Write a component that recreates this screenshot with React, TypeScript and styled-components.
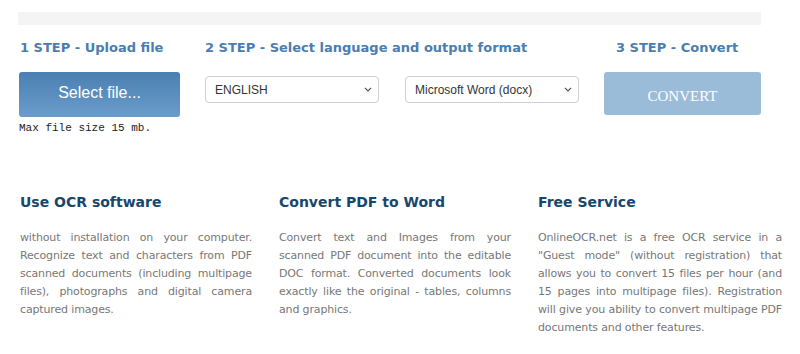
import styled, { createGlobalStyle } from "styled-components";

const GlobalStyle = createGlobalStyle`
  html, body {
    margin: 0;
    padding: 0;
    background: #ffffff;
  }
  body {
    font-family: "DejaVu Sans", Verdana, sans-serif;
  }
`;

const Page = styled.div`
  width: 800px;
  height: 354px;
  overflow: hidden;
  padding-top: 12px;
  box-sizing: border-box;
`;

const TopBar = styled.div`
  margin-left: 18px;
  width: 743px;
  height: 13px;
  background: #f4f4f4;
`;

const Steps = styled.div`
  display: grid;
  grid-template-columns: 161px 374px 157px;
  column-gap: 25px;
  margin: 15px 0 0 19px;
`;

const Step = styled.div`
  display: flex;
  flex-direction: column;
  align-items: flex-start;
`;

const StepTitle = styled.h3<{ $shift?: number }>`
  margin: 0 0 0 ${(p) => p.$shift ?? 0}px;
  font-size: 13px;
  line-height: 16px;
  font-weight: bold;
  color: #4a7db0;
  white-space: nowrap;
  height: 16px;
`;

const SelectFile = styled.button`
  margin-top: 16px;
  width: 161px;
  height: 45px;
  border: none;
  border-radius: 3px;
  background: linear-gradient(#4a7fb1, #6b9dcc);
  color: #ffffff;
  font-family: "Liberation Sans", Arial, sans-serif;
  font-size: 16px;
  padding: 0 0 3px;
  cursor: pointer;
`;

const Hint = styled.div`
  margin-top: 5px;
  font-family: "Liberation Mono", "Courier New", monospace;
  font-size: 11px;
  line-height: 12px;
  color: #222;
`;

const SelectRow = styled.div`
  display: flex;
  gap: 26px;
  margin-top: 20px;
`;

const SelectWrap = styled.div`
  position: relative;
  width: 174px;
  height: 27px;
`;

const Select = styled.select`
  appearance: none;
  width: 100%;
  height: 100%;
  box-sizing: border-box;
  border: 1px solid #d0d0d0;
  border-radius: 4px;
  background: #fff;
  padding: 0 0 0 9px;
  font-family: "Liberation Sans", Arial, sans-serif;
  font-size: 12px;
  color: #333;
  outline: none;
`;

const Chevron = styled.svg`
  position: absolute;
  right: 7px;
  top: 11px;
  pointer-events: none;
`;

const ConvertButton = styled.button`
  margin-top: 16px;
  width: 157px;
  height: 43px;
  border: none;
  border-radius: 3px;
  background: #9bbcd9;
  color: #ffffff;
  font-family: "Liberation Serif", "Times New Roman", serif;
  font-size: 15px;
  padding: 6px 0 0;
  cursor: default;
`;

const Features = styled.div`
  display: grid;
  grid-template-columns: 232px 232px 244px;
  column-gap: 27px;
  margin: 59px 0 0 20px;
`;

const Feature = styled.div``;

const FeatureTitle = styled.h2`
  margin: 0;
  font-size: 14px;
  line-height: 18px;
  font-weight: bold;
  color: #17476c;
`;

const FeatureText = styled.p`
  margin: 18px 0 0;
  font-size: 11px;
  line-height: 18px;
  letter-spacing: -0.15px;
  color: #777777;
  text-align: justify;
`;

function Dropdown({ value }: { value: string }) {
  return (
    <SelectWrap>
      <Select defaultValue={value}>
        <option>{value}</option>
      </Select>
      <Chevron width="8" height="5" viewBox="0 0 8 5">
        <path d="M1 1l3 3 3-3" fill="none" stroke="#555" strokeWidth="1.1" />
      </Chevron>
    </SelectWrap>
  );
}

const features = [
  {
    title: "Use OCR software",
    text: "without installation on your computer. Recognize text and characters from PDF scanned documents (including multipage files), photographs and digital camera captured images.",
  },
  {
    title: "Convert PDF to Word",
    text: "Convert text and Images from your scanned PDF document into the editable DOC format. Converted documents look exactly like the original - tables, columns and graphics.",
  },
  {
    title: "Free Service",
    text: 'OnlineOCR.net is a free OCR service in a "Guest mode" (without registration) that allows you to convert 15 files per hour (and 15 pages into multipage files). Registration will give you ability to convert multipage PDF documents and other features.',
  },
];

export default function App() {
  return (
    <>
      <GlobalStyle />
      <Page>
        <TopBar />
        <Steps>
          <Step>
            <StepTitle $shift={1}>1 STEP - Upload file</StepTitle>
            <SelectFile>Select file...</SelectFile>
            <Hint>Max file size 15 mb.</Hint>
          </Step>
          <Step>
            <StepTitle>2 STEP - Select language and output format</StepTitle>
            <SelectRow>
              <Dropdown value="ENGLISH" />
              <Dropdown value="Microsoft Word (docx)" />
            </SelectRow>
          </Step>
          <Step>
            <StepTitle $shift={12}>3 STEP - Convert</StepTitle>
            <ConvertButton>CONVERT</ConvertButton>
          </Step>
        </Steps>
        <Features>
          {features.map((f) => (
            <Feature key={f.title}>
              <FeatureTitle>{f.title}</FeatureTitle>
              <FeatureText>{f.text}</FeatureText>
            </Feature>
          ))}
        </Features>
      </Page>
    </>
  );
}
